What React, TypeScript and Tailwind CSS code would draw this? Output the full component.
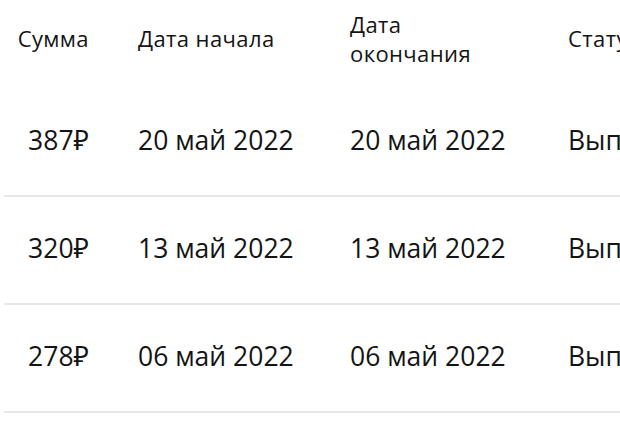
const ROWS = [
  { sum: '387₽', start: '20 май 2022', end: '20 май 2022', status: 'Выполнен' },
  { sum: '320₽', start: '13 май 2022', end: '13 май 2022', status: 'Выполнен' },
  { sum: '278₽', start: '06 май 2022', end: '06 май 2022', status: 'Выполнен' },
];

export default function App() {
  return (
    <div
      className="w-[620px] h-[429px] overflow-hidden bg-white text-[#141414]"
      style={{ fontFamily: '"Open Sans", "Noto Sans", sans-serif' }}
    >
      <div className="w-[760px] pl-[4px]">
        {/* Header */}
        <div className="flex h-[89px] items-center text-[22px] leading-[29px] tracking-[0.4px] pb-[12px]">
          <div className="w-[85px] text-right">Сумма</div>
          <div className="w-[212px] ml-[49px]">Дата начала</div>
          <div className="w-[218px]">
            Дата
            <br />
            окончания
          </div>
          <div className="flex-1">Статус</div>
        </div>

        {/* Rows */}
        {ROWS.map((row, i) => (
          <div
            key={i}
            className="flex h-[108px] items-center border-b-2 border-[#e8e8e8] text-[26.5px] pb-[2px]"
          >
            <div className="w-[85px] text-right">{row.sum}</div>
            <div className="w-[212px] ml-[49px]">{row.start}</div>
            <div className="w-[218px]">{row.end}</div>
            <div className="flex-1">{row.status}</div>
          </div>
        ))}
      </div>
    </div>
  );
}
